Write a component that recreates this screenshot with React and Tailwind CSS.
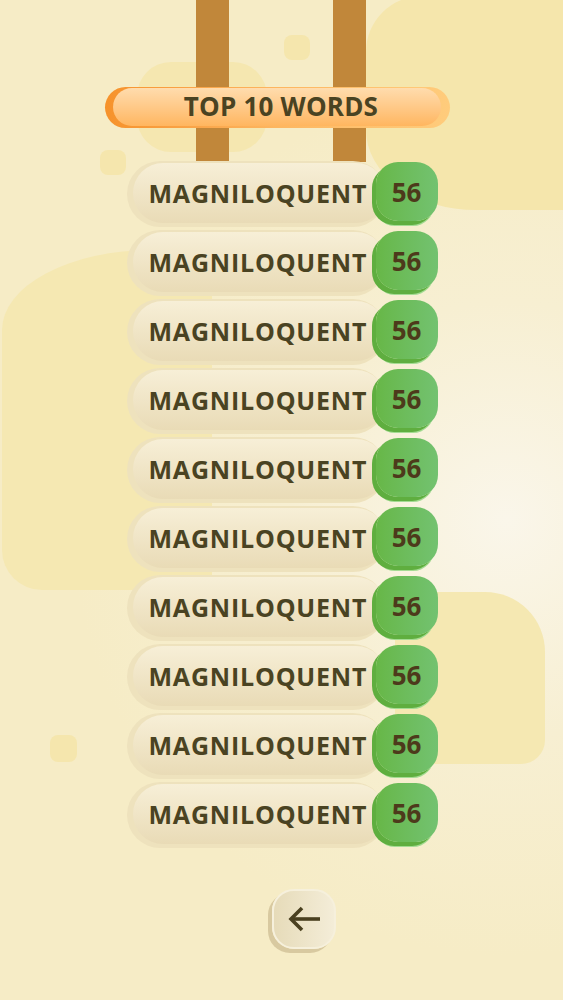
import React from "react";

function Row({ word, score }) {
  return (
    <div className="flex items-center w-[311px] h-[66px]">
      <div className="flex-1 h-full rounded-full bg-[#eee2bd] pl-[6px] pt-[2px] pb-[4px] mr-[-10px]">
        <div className="h-full rounded-full bg-gradient-to-b from-[#f7efd7] to-[#e9dbb6] flex items-center pl-[16px]">
          <span className="text-[25px] font-bold text-[#4a4322] leading-none tracking-[0.8px]">{word}</span>
        </div>
      </div>
      <div className="w-[62px] h-[59px] mb-[5px] shrink-0 rounded-[22px] bg-gradient-to-r from-[#67b747] to-[#73c270] flex items-center justify-center shadow-[-4px_4px_0_0_#5fae3f,-3px_6px_0_-1px_#a3db92]">
        <span className="text-[26px] font-bold text-[#4d3a1b] leading-none">{score}</span>
      </div>
    </div>
  );
}

export default function App() {
  const rows = Array.from({ length: 10 }, () => ({ word: "MAGNILOQUENT", score: 56 }));
  return (
    <div
      className="relative w-[563px] h-[1000px] overflow-hidden bg-[radial-gradient(circle_at_90%_52%,#faf6ea_0%,#f7efd2_30%,#f6ecc6_60%)]"
      style={{ fontFamily: '"Open Sans", "Noto Sans", sans-serif' }}
    >
      {/* decorative background blobs */}
      <div className="absolute left-[366px] top-[-4px] w-[220px] h-[214px] rounded-tl-[56px] rounded-bl-[110px_80px] bg-[#f5e6ac]"></div>
      <div className="absolute left-[2px] top-[250px] w-[210px] h-[340px] rounded-tl-[150px_80px] rounded-bl-[40px] bg-[#f5e8b2]"></div>
      <div className="absolute left-[395px] top-[592px] w-[150px] h-[172px] rounded-tr-[60px] rounded-br-[24px] bg-[#f5e8b2]"></div>
      <div className="absolute left-[137px] top-[62px] w-[130px] h-[90px] rounded-[34px] bg-[#f5e7b0]"></div>
      <div className="absolute left-[284px] top-[35px] w-[26px] h-[25px] rounded-[8px] bg-[#f5e6ad]"></div>
      <div className="absolute left-[100px] top-[150px] w-[26px] h-[25px] rounded-[8px] bg-[#f5e6ad]"></div>
      <div className="absolute left-[50px] top-[735px] w-[27px] h-[27px] rounded-[8px] bg-[#f5e6ad]"></div>

      {/* ropes */}
      <div className="absolute left-[196px] top-0 w-[33px] h-[162px] bg-[#c1873a]"></div>
      <div className="absolute left-[333px] top-0 w-[33px] h-[162px] bg-[#c1873a]"></div>

      <div className="relative flex flex-col items-center pt-[87px]">
        {/* header */}
        <div className="w-[345px] h-[41px] mr-[9px] rounded-full bg-gradient-to-r from-[#f6922a] via-[#fdb660] to-[#ffcc7c] pl-[8px] pr-[9px] pt-[1px] pb-[2px]">
          <div className="h-full rounded-full bg-gradient-to-b from-[#ffdcad] to-[#ffb65f] flex items-center justify-center">
            <span className="text-[26px] font-bold text-[#4a4322] leading-none tracking-[0.2px] mt-[-3px] ml-[9px]">TOP 10 WORDS</span>
          </div>
        </div>

        {/* rows */}
        <div className="mt-[33px] flex flex-col gap-[3px] ml-[1px]">
          {rows.map((r, i) => (
            <Row key={i} word={r.word} score={r.score} />
          ))}
        </div>

        {/* back button */}
        <div className="mt-[41px] ml-[44px] w-[64px] h-[60px] rounded-[22px] border-[2px] border-[#f6f0dc] bg-gradient-to-r from-[#e6dbb9] to-[#f4edd8] flex items-center justify-center shadow-[-4px_4px_0_0_#d8c9a0]">
          <svg width="34" height="26" viewBox="0 0 34 26" fill="none" stroke="#4a4020" strokeWidth="3.6" strokeLinecap="butt" strokeLinejoin="miter">
            <path d="M33 13H4" />
            <path d="M15 2L4 13l11 11" />
          </svg>
        </div>
      </div>
    </div>
  );
}
